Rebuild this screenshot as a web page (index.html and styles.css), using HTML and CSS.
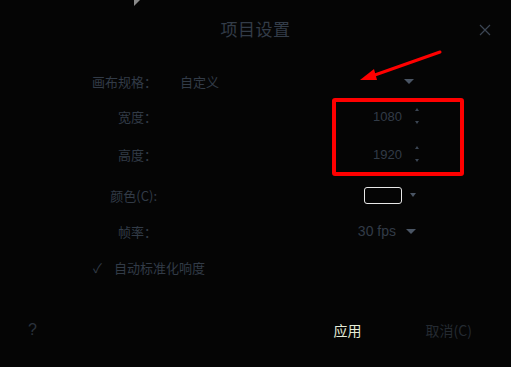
FILE: index.html
```html
<!DOCTYPE html>
<html lang="zh-CN">
<head>
  <meta charset="UTF-8" />
  <title>项目设置</title>
  <link rel="stylesheet" href="styles.css">
</head>
<body>
  <div class="dialog">
    <header class="dlg-head">
      <h1>项目设置</h1>
      <span class="close">
        <svg width="12" height="12" viewBox="0 0 12 12"><path d="M1 1L11 11M11 1L1 11" stroke="#3b4553" stroke-width="1.2"/></svg>
      </span>
    </header>

    <div class="form">
      <label class="r1">画布规格：</label>
      <div class="ctl combo r1"><span>自定义</span><i class="tri"></i></div>

      <label class="r2">宽度：</label>
      <div class="ctl spin r2"><span>1080</span><b class="arrows"><i class="up"></i><i class="down"></i></b></div>

      <label class="r3">高度：</label>
      <div class="ctl spin r3"><span>1920</span><b class="arrows"><i class="up"></i><i class="down"></i></b></div>

      <label class="r4">颜色(C):</label>
      <div class="ctl right r4"><span class="swatch"></span><i class="tri small"></i></div>

      <label class="r5">帧率：</label>
      <div class="ctl right r5"><span>30 fps</span><i class="tri"></i></div>
    </div>

    <div class="check">
      <span class="tick">✓</span>
      <span>自动标准化响度</span>
    </div>

    <footer class="dlg-foot">
      <span class="help">?</span>
      <div class="buttons">
        <span class="btn apply">应用</span>
        <span class="btn cancel">取消(C)</span>
      </div>
    </footer>
  </div>

  <!-- annotations drawn over the screenshot -->
  <div class="mark-box"></div>
  <svg class="mark-arrow" width="511" height="367" viewBox="0 0 511 367">
    <path d="M440 52L372 76" stroke="#f00" stroke-width="3" stroke-linecap="round"/>
    <path d="M360 80L374 69L377 80Z" fill="#f00"/>
  </svg>
  <span class="cursor"></span>
</body>
</html>
```

FILE: styles.css
```css
* {
  margin: 0;
  padding: 0;
  box-sizing: border-box;
}

html, body {
  width: 511px;
  height: 367px;
  overflow: hidden;
  background: #050505;
  font-family: "Noto Sans CJK SC", "Noto Sans", sans-serif;
  color: #323b47;
  font-size: 13px;
}

.dialog {
  height: 367px;
  display: flex;
  flex-direction: column;
}

.dlg-head {
  height: 56px;
  flex-shrink: 0;
  display: flex;
  justify-content: center;
  align-items: center;
  position: relative;
}

.dlg-head h1 {
  font-size: 17px;
  font-weight: normal;
  letter-spacing: 0.5px;
  color: #333c48;
}

.close {
  position: absolute;
  right: 20px;
  top: 24px;
  display: flex;
}

.form {
  margin-top: 8px;
  display: grid;
  grid-template-columns: 157px 240px;
  grid-template-rows: 34px 36px 40px 42px 30px;
  column-gap: 23px;
  align-items: center;
}

.form label {
  text-align: right;
  white-space: nowrap;
}

.ctl {
  display: flex;
  align-items: center;
  height: 100%;
}

.combo {
  justify-content: space-between;
  padding-right: 6px;
}

.spin {
  justify-content: flex-end;
  padding-right: 1px;
}

.spin span {
  font-family: "Liberation Sans", sans-serif;
  font-size: 13px;
  color: #323b47;
  margin-right: 2px;
}

.right {
  justify-content: flex-end;
  padding-right: 4px;
}

.right span {
  font-family: "Liberation Sans", sans-serif;
  font-size: 14px;
  color: #323b47;
}

.arrows {
  display: flex;
  flex-direction: column;
  justify-content: space-between;
  height: 16px;
  margin-left: 11px;
}

.arrows i {
  display: block;
  width: 0;
  height: 0;
  border-left: 2.5px solid transparent;
  border-right: 2.5px solid transparent;
}

.arrows .up {
  border-bottom: 3px solid #3b4553;
}

.arrows .down {
  border-top: 3px solid #3b4553;
}

.tri {
  display: block;
  width: 0;
  height: 0;
  border-left: 5px solid transparent;
  border-right: 5px solid transparent;
  border-top: 5px solid #4a5564;
  margin-left: 10px;
}

.tri.small {
  border-left-width: 3px;
  border-right-width: 3px;
  border-top-width: 4px;
  margin-left: 8px;
  margin-right: 0;
}

.swatch {
  display: block;
  width: 38px;
  height: 17px;
  border: 1px solid #e8e8e8;
  border-radius: 3px;
}

.check {
  height: 42px;
  display: flex;
  align-items: center;
  padding-left: 93px;
  gap: 12px;
}

.tick {
  font-size: 13px;
  color: #323b47;
}

.dlg-foot {
  margin-top: 22px;
  height: 40px;
  display: flex;
  align-items: center;
  justify-content: space-between;
  padding-left: 28px;
  padding-right: 39px;
}

.help {
  font-family: "Liberation Sans", sans-serif;
  font-size: 16px;
  color: #2a323c;
}

.buttons {
  display: flex;
  gap: 64px;
}

.btn {
  font-size: 14px;
}

.apply {
  color: #e4ecd8;
}

.cancel {
  color: #242a31;
}

.mark-box {
  position: absolute;
  left: 332px;
  top: 98px;
  width: 132px;
  height: 78px;
  border: 4px solid #f00;
  border-radius: 3px;
}

.mark-arrow {
  position: absolute;
  left: 0;
  top: 0;
  pointer-events: none;
}

.cursor {
  position: absolute;
  left: 134px;
  top: 0;
  width: 0;
  height: 0;
  border-left: 6px solid #8a8a8a;
  border-bottom: 6px solid transparent;
}
```
